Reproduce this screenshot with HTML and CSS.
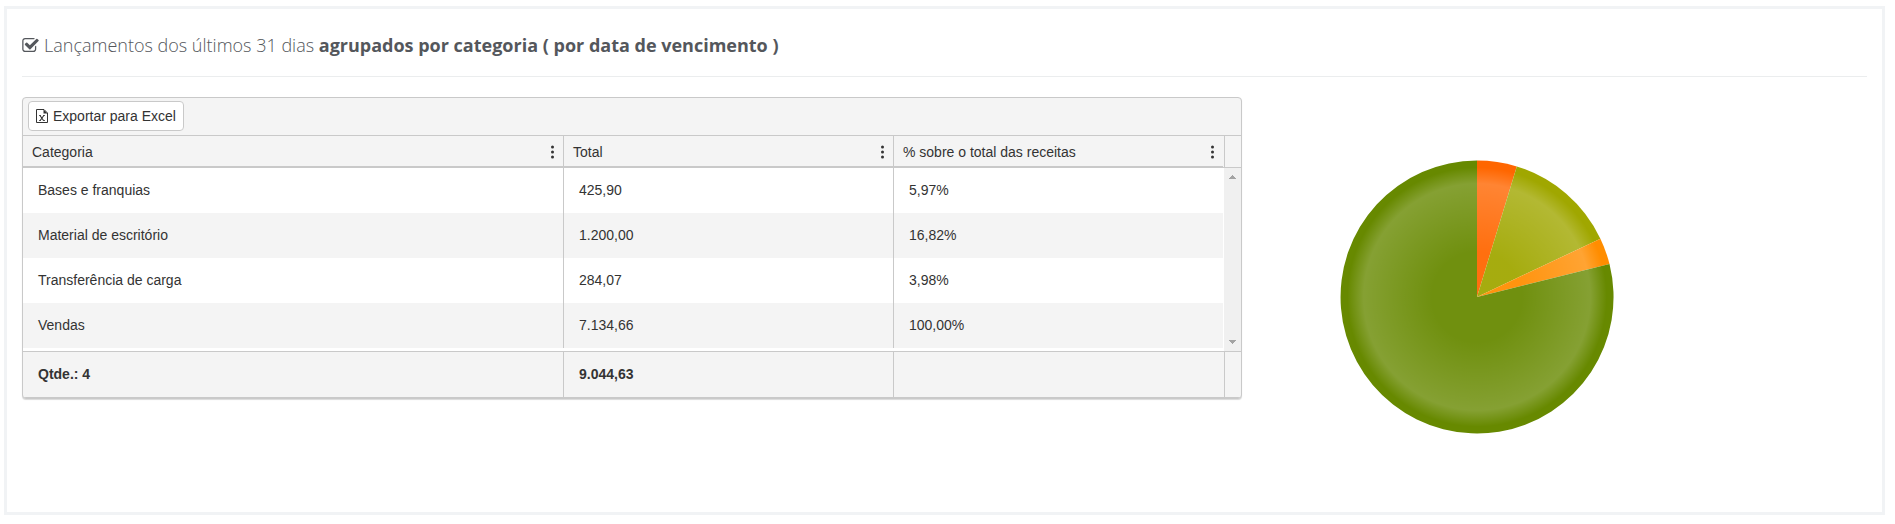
FILE: index.html
```html
<!DOCTYPE html>
<html lang="pt-BR">
<head>
<meta charset="utf-8">
<title>Lançamentos por categoria</title>
<link rel="stylesheet" href="styles.css">
</head>
<body>
<main class="panel">
  <h2 class="panel-title">
    <svg class="title-icon" viewBox="64 128 1664 1408" aria-hidden="true"><path d="M1472 930v318q0 119-84.5 203.5t-203.5 84.5h-832q-119 0-203.5-84.5t-84.5-203.5v-832q0-119 84.5-203.5t203.5-84.5h832q63 0 117 25 15 7 18 23 3 17-9 29l-49 49q-10 10-23 10-3 0-9-2-23-6-45-6h-832q-66 0-113 47t-47 113v832q0 66 47 113t113 47h832q66 0 113-47t47-113v-254q0-13 9-22l64-64q10-10 23-10 6 0 12 3 20 8 20 29zm231-489l-814 814q-24 24-57 24t-57-24l-430-430q-24-24-24-57t24-57l110-110q24-24 57-24t57 24l263 263 647-647q24-24 57-24t57 24l110 110q24 24 24 57t-24 57z"/></svg>
    <span>Lançamentos dos últimos 31 dias <strong>agrupados por categoria ( por data de vencimento )</strong></span>
  </h2>
  <div class="row">
    <section class="grid">
      <div class="toolbar">
        <button type="button" class="export">
          <svg class="file-icon" viewBox="0 0 12 14" aria-hidden="true"><path d="M.5.5h7.500l3.500 3.500v9.500H.5z" fill="none" stroke="currentColor"/><path d="M7.500.5v4h4z" fill="currentColor"/><path d="M4 6.500 7.500 11.500M7.800 6.500 4.200 11.500" fill="none" stroke="currentColor" stroke-width="1.100"/><path d="M3 6.500h2M7 6.500h2M3 11.500h2M7 11.500h2" stroke="currentColor" stroke-width=".8"/></svg>
          Exportar para Excel
        </button>
      </div>
      <div class="band head">
        <table>
          <colgroup><col class="c-name"><col><col></colgroup>
          <thead>
            <tr>
              <th scope="col"><div class="th"><span>Categoria</span><button type="button" class="menu" aria-label="Opções de Categoria"><svg viewBox="0 0 3 14"><circle cx="1.5" cy="2" r="1.5"/><circle cx="1.5" cy="7" r="1.5"/><circle cx="1.5" cy="12" r="1.5"/></svg></button></div></th>
              <th scope="col"><div class="th"><span>Total</span><button type="button" class="menu" aria-label="Opções de Total"><svg viewBox="0 0 3 14"><circle cx="1.5" cy="2" r="1.5"/><circle cx="1.5" cy="7" r="1.5"/><circle cx="1.5" cy="12" r="1.5"/></svg></button></div></th>
              <th scope="col"><div class="th"><span>% sobre o total das receitas</span><button type="button" class="menu" aria-label="Opções de percentual"><svg viewBox="0 0 3 14"><circle cx="1.5" cy="2" r="1.5"/><circle cx="1.5" cy="7" r="1.5"/><circle cx="1.5" cy="12" r="1.5"/></svg></button></div></th>
            </tr>
          </thead>
        </table>
        <div class="end"></div>
      </div>
      <div class="band body">
        <table>
          <colgroup><col class="c-name"><col><col></colgroup>
          <tbody>
            <tr><td>Bases e franquias</td><td>425,90</td><td>5,97%</td></tr>
            <tr><td>Material de escritório</td><td>1.200,00</td><td>16,82%</td></tr>
            <tr><td>Transferência de carga</td><td>284,07</td><td>3,98%</td></tr>
            <tr><td>Vendas</td><td>7.134,66</td><td>100,00%</td></tr>
          </tbody>
        </table>
        <div class="scrollbar" aria-hidden="true">
          <svg viewBox="0 0 7 4"><path d="M3 0h1v1h1v1h1v1h1v1H0V3h1V2h1V1h1z"/></svg>
          <svg viewBox="0 0 7 4"><path d="M0 0h7v1H6v1H5v1H4v1H3V3H2V2H1V1H0z"/></svg>
        </div>
      </div>
      <div class="band foot">
        <table>
          <colgroup><col class="c-name"><col><col></colgroup>
          <tbody><tr><td>Qtde.: 4</td><td>9.044,63</td><td></td></tr></tbody>
        </table>
        <div class="end"></div>
      </div>
    </section>
    <div class="chart">
      <svg viewBox="0 0 410 400" role="img" aria-label="Total por categoria">
        <defs>
          <radialGradient id="bevel" gradientUnits="userSpaceOnUse" cx="205" cy="200" r="136.5">
            <stop offset=".33" stop-color="#fff" stop-opacity=".06"/>
            <stop offset=".83" stop-color="#fff" stop-opacity=".2"/>
            <stop offset=".95" stop-color="#fff" stop-opacity="0"/>
          </radialGradient>
        </defs>
        <path fill="#ff6600" d="M205 200V63.500A136.500 136.500 0 0 1 244.800 69.400z"/>
        <path fill="#a0a700" d="M205 200 244.800 69.400A136.500 136.500 0 0 1 328.400 141.700z"/>
        <path fill="#ff8d00" d="M205 200 328.400 141.700A136.500 136.500 0 0 1 337.500 167z"/>
        <path fill="#678900" d="M205 200 337.500 167A136.500 136.500 0 1 1 205 63.500z"/>
        <circle cx="205" cy="200" r="136.500" fill="url(#bevel)"/>
      </svg>
    </div>
  </div>
</main>
</body>
</html>
```
FILE: styles.css
```css
* { box-sizing: border-box; }
body {
  margin: 6px 10px 0 4px;
  background: #fff;
  color: #333;
  font: 14px/20px "Liberation Sans", Arial, sans-serif;
}
.panel {
  padding: 15px;
  border: 3px solid #f1f3f5;
}
.panel-title {
  display: flex;
  align-items: center;
  gap: 5px;
  margin: 0 0 20px;
  padding: 9px 0 19px;
  border-bottom: 1px solid #ebedee;
  color: #54575c;
  font: 300 18px/24px "Open Sans", sans-serif;
}
.panel-title strong { font-weight: 700; }
.title-icon { width: 17px; height: 14px; fill: currentColor; }
.row {
  display: grid;
  grid-template-columns: minmax(0, 1220fr) minmax(0, 595fr);
  gap: 30px;
  align-items: start;
}
.grid {
  border: 1px solid #c9c9c9;
  border-radius: 4px;
  background: #f4f4f4;
  box-shadow: 0 1px 1px rgba(0, 0, 0, 0.15);
  overflow: hidden;
}
.toolbar {
  padding: 3px 5px 4px;
  border-bottom: 1px solid #c9c9c9;
}
.export {
  display: flex;
  align-items: center;
  gap: 5px;
  padding: 4px 7px;
  border: 1px solid #c9c9c9;
  border-radius: 4px;
  background: #fff;
  color: #333;
  font: inherit;
}
.file-icon { width: 12px; height: 14px; }
.band { display: flex; }
.band table {
  flex: 1;
  width: 0;
  table-layout: fixed;
  border-collapse: separate;
  border-spacing: 0;
}
.c-name { width: 45%; }
th, td { padding: 0; text-align: left; }
th + th, td + td { border-left: 1px solid #c9c9c9; }
.head { border-bottom: 1px solid #c9c9c9; }
.head th {
  height: 31px;
  padding-top: 2px;
  border-bottom: 1px solid #c9c9c9;
  font-weight: 400;
}
.th {
  display: flex;
  justify-content: space-between;
  align-items: center;
  padding: 0 5px 0 9px;
}
.menu {
  display: flex;
  padding: 3px 4px;
  border: 0;
  background: none;
  color: #333;
}
.menu svg { width: 3px; height: 14px; fill: currentColor; }
.end {
  width: 17px;
  margin-left: 1px;
  border-left: 1px solid #c9c9c9;
}
.body { background: #fff; }
.body table { margin-bottom: 3px; }
td { height: 45px; padding: 12px 15px 13px; }
.body tr:nth-child(even) { background: #f4f4f4; }
.scrollbar {
  display: flex;
  flex-direction: column;
  justify-content: space-between;
  align-items: center;
  width: 17px;
  margin-left: 1px;
  padding: 7px 0;
  background: #f0f0f0;
}
.scrollbar svg { width: 7px; height: 4px; fill: #a3a3a3; }
.foot {
  border-top: 1px solid #c9c9c9;
  border-bottom: 1px solid #c9c9c9;
  font-weight: 700;
}
.chart svg { display: block; width: 410px; max-width: 100%; }
```
